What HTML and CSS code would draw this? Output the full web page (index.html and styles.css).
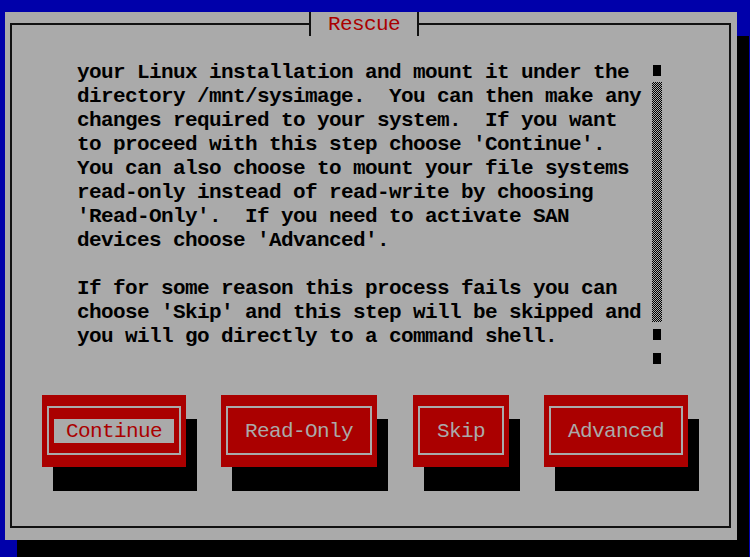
FILE: index.html
```html
<!DOCTYPE html>
<html lang="en">
<head>
    <meta charset="UTF-8">
    <title>Rescue</title>
    <link rel="stylesheet" href="styles.css">
</head>
<body>
    <div class="window">
        <div class="title">Rescue</div>
        <div class="frame">
            <div class="content">
                <pre class="message">your Linux installation and mount it under the
directory /mnt/sysimage.  You can then make any
changes required to your system.  If you want
to proceed with this step choose 'Continue'.
You can also choose to mount your file systems
read-only instead of read-write by choosing
'Read-Only'.  If you need to activate SAN
devices choose 'Advanced'.

If for some reason this process fails you can
choose 'Skip' and this step will be skipped and
you will go directly to a command shell.</pre>
                <div class="scrollbar">
                    <div class="cell"><span class="block"></span></div>
                    <div class="track"></div>
                    <div class="cell"><span class="block"></span></div>
                    <div class="cell"><span class="block"></span></div>
                </div>
            </div>

            <div class="buttons">
                <div class="btn focused"><div class="btn-frame"><span class="btn-label">Continue</span></div></div>
                <div class="btn wide"><div class="btn-frame"><span class="btn-label">Read-Only</span></div></div>
                <div class="btn narrow"><div class="btn-frame"><span class="btn-label">Skip</span></div></div>
                <div class="btn"><div class="btn-frame"><span class="btn-label">Advanced</span></div></div>
            </div>
        </div>
    </div>
</body>
</html>
```

FILE: styles.css
```css
body {
    margin: 0;
    padding: 12px 0 0 5px;
    height: 557px;
    box-sizing: border-box;
    overflow: hidden;
    background-color: #0000aa;
    font-family: 'Liberation Mono', 'DejaVu Sans Mono', monospace;
    font-size: 21px;
    letter-spacing: -0.6px;
    color: #000000;
}
.window {
    position: relative;
    width: 732px;
    height: 528px;
    box-sizing: border-box;
    padding: 11px 6px 12px 5px;
    background-color: #aaaaaa;
    box-shadow: 12px 24px 0 #000000;
}
.title {
    position: absolute;
    left: 304px;
    top: 0;
    width: 106px;
    height: 24px;
    line-height: 25px;
    border-left: 2px solid #111111;
    border-right: 2px solid #111111;
    background-color: #aaaaaa;
    color: #aa0000;
    text-align: center;
}
.frame {
    height: 100%;
    box-sizing: border-box;
    border: 2px solid #111111;
    padding: 33px 0 0 65px;
}
.content {
    display: flex;
    align-items: flex-start;
}
.message {
    margin: 3px 0 0;
    width: 575px;
    font: inherit;
    line-height: 24px;
    font-weight: bold;
}
.scrollbar {
    display: flex;
    flex-direction: column;
    width: 10px;
}
.cell {
    height: 24px;
    display: flex;
    justify-content: center;
    align-items: center;
}
.block {
    width: 8px;
    height: 11px;
    background-color: #000000;
}
.track {
    height: 240px;
    background: repeating-conic-gradient(#000000 0 25%, #aaaaaa 0 50%) 0 0 / 2px 2px;
}
.buttons {
    display: flex;
    gap: 35px;
    margin: 25px 0 0 -35px;
}
.btn {
    width: 144px;
    height: 72px;
    box-sizing: border-box;
    padding: 11px 5px 12px 5px;
    background-color: #aa0000;
    box-shadow: 11px 24px 0 #000000;
}
.btn.wide {
    width: 156px;
    margin-right: 1px;
}
.btn.narrow {
    width: 96px;
}
.btn-frame {
    height: 100%;
    box-sizing: border-box;
    border: 2px solid #aaaaaa;
    display: flex;
    justify-content: center;
    align-items: center;
}
.btn-label {
    height: 24px;
    line-height: 25px;
    padding: 0 12px;
    color: #aaaaaa;
}
.btn.focused .btn-label {
    background-color: #aaaaaa;
    color: #aa0000;
}
```
